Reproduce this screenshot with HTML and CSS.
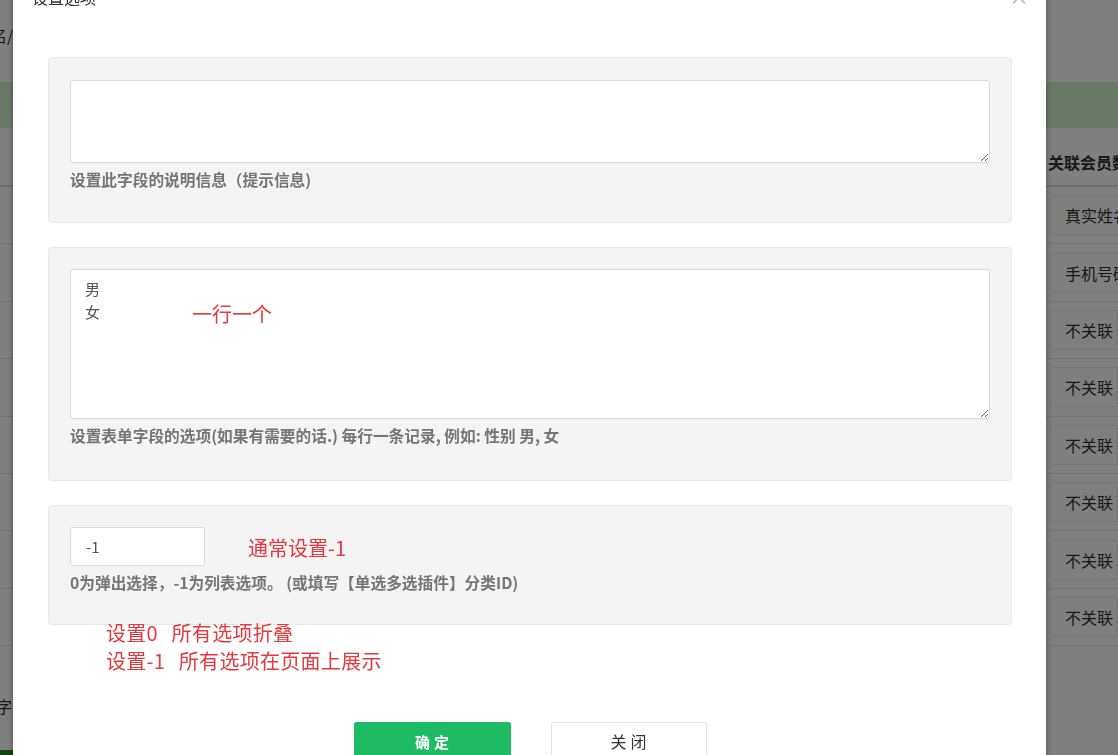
FILE: index.html
```html
<!DOCTYPE html>
<html lang="zh-CN">
<head>
  <meta charset="UTF-8" />
  <title>设置选项</title>
  <link rel="stylesheet" href="styles.css">
</head>
<body>

  <div class="page">
    <div class="crumb">用户名/表单字段</div>
    <div class="notice">提示：修改字段后请保存</div>
    <div class="table">
      <div class="tr th"><span class="c1">字段名称</span><span class="c2">关联会员数据</span></div>
      <div class="tr"><span class="c1">姓名</span><span class="c2"><span class="sel">真实姓名</span></span></div>
      <div class="tr"><span class="c1">电话</span><span class="c2"><span class="sel">手机号码</span></span></div>
      <div class="tr"><span class="c1">性别</span><span class="c2"><span class="sel">不关联</span></span></div>
      <div class="tr"><span class="c1">年龄</span><span class="c2"><span class="sel">不关联</span></span></div>
      <div class="tr"><span class="c1">地址</span><span class="c2"><span class="sel">不关联</span></span></div>
      <div class="tr"><span class="c1">备注</span><span class="c2"><span class="sel">不关联</span></span></div>
      <div class="tr"><span class="c1">职业</span><span class="c2"><span class="sel">不关联</span></span></div>
      <div class="tr"><span class="c1">爱好</span><span class="c2"><span class="sel">不关联</span></span></div>
    </div>
    <div class="foot">添加字</div>
    <div class="foot-bar"></div>
  </div>

  <div class="shade"></div>

  <div class="dialog">
    <div class="dlg-head">
      设置选项
      <span class="dlg-close">&times;</span>
    </div>

    <div class="dlg-body">
      <div class="box box-first">
        <textarea class="area area-sm"></textarea>
        <div class="tip">设置此字段的说明信息（提示信息)</div>
      </div>

      <div class="box">
        <div class="area-wrap">
          <textarea class="area area-lg">男
女</textarea>
          <span class="mark mark-area">一行一个</span>
        </div>
        <div class="tip">设置表单字段的选项(如果有需要的话.) 每行一条记录, 例如: 性别 男, 女</div>
      </div>

      <div class="box box-last">
        <div class="line">
          <input type="text" class="num" value="-1">
          <span class="mark">通常设置-1</span>
        </div>
        <div class="tip">0为弹出选择，-1为列表选项。 (或填写【单选多选插件】分类ID)</div>
      </div>

      <div class="notes">
        <div>设置0&nbsp;&nbsp;所有选项折叠</div>
        <div>设置-1&nbsp;&nbsp;所有选项在页面上展示</div>
      </div>

      <div class="btns">
        <button class="btn btn-ok">确定</button>
        <button class="btn btn-close">关闭</button>
      </div>
    </div>
  </div>

</body>
</html>
```

FILE: styles.css
```css
html, body {
  margin: 0;
  height: 100%;
  overflow: hidden;
}
body {
  font-family: "Noto Sans CJK SC", "Liberation Sans", sans-serif;
  background-color: #fff;
  color: #333;
}
.page {
  width: 1118px;
  font-size: 16px;
}
.crumb {
  height: 82px;
  line-height: 70px;
  text-indent: -41px;
  white-space: nowrap;
  overflow: hidden;
}
.notice {
  height: 46px;
  line-height: 46px;
  background-color: #d6f4d0;
  padding-left: 20px;
  color: #3c763d;
}
.tr {
  display: grid;
  grid-template-columns: 1034px 1fr;
  height: 56.4px;
  border-bottom: 1px solid #e6e6e6;
  align-items: center;
  white-space: nowrap;
  overflow: hidden;
}
.tr.th {
  height: 54px;
  align-items: end;
  padding-bottom: 3px;
  font-weight: bold;
  border-bottom: 2px solid #ddd;
}
.c1 {
  padding-left: 20px;
}
.c2 {
  padding-left: 14px;
}
.tr.th .c2 {
  padding-left: 14px;
  padding-bottom: 8px;
}
.sel {
  display: block;
  margin-left: 2px;
  height: 38px;
  line-height: 38px;
  padding-left: 14px;
  border: 1px solid #eaeaea;
  border-radius: 2px;
}
.foot {
  margin-top: 45px;
  text-indent: -36px;
  line-height: 30px;
  white-space: nowrap;
}
.foot-bar {
  margin-top: 29px;
  height: 12px;
  width: 100px;
  background-color: #1f8f1f;
}

.shade {
  position: fixed;
  left: 0;
  top: 0;
  right: 0;
  bottom: 0;
  background-color: rgba(0, 0, 0, 0.5);
}

.dialog {
  position: fixed;
  left: 13px;
  top: -24px;
  width: 1033px;
  height: 820px;
  background-color: #fff;
  box-shadow: 0 0 6px rgba(0, 0, 0, 0.4);
}
.dlg-head {
  position: relative;
  height: 42px;
  line-height: 42px;
  padding-left: 19px;
  font-size: 16px;
  color: #333;
}
.dlg-close {
  position: absolute;
  right: 17px;
  top: 0;
  font-size: 24px;
  color: #aaa;
  font-family: "DejaVu Sans", sans-serif;
  font-weight: 300;
}
.dlg-body {
  padding: 39px 34px 0 35px;
}
.box {
  background-color: #f4f4f4;
  border: 1px solid #e8e8e8;
  border-radius: 4px;
  padding: 21px 21px 32px;
  margin-bottom: 24px;
}
.box-first {
  padding-top: 22px;
  padding-bottom: 30px;
}
.box-last {
  margin-bottom: 0;
  padding-bottom: 29px;
}
.area-wrap {
  position: relative;
}
.area {
  display: block;
  width: 100%;
  box-sizing: border-box;
  border: 1px solid #d9d9d9;
  border-radius: 3px;
  background-color: #fff;
  padding: 7px 14px;
  font-family: "Noto Sans CJK SC", "Liberation Sans", sans-serif;
  font-size: 15px;
  line-height: 23px;
  color: #555;
  resize: vertical;
  margin: 0;
}
.area-sm {
  height: 83px;
}
.area-lg {
  height: 150px;
}
.tip {
  margin-top: 5px;
  line-height: 24px;
  font-size: 15.7px;
  font-weight: bold;
  color: #757575;
  white-space: nowrap;
}
.mark {
  color: #e5393d;
  font-size: 20px;
}
.mark-area {
  position: absolute;
  left: 122px;
  top: 30px;
  line-height: 30px;
}
.line {
  display: flex;
  align-items: center;
  gap: 43px;
}
.num {
  width: 135px;
  height: 39px;
  box-sizing: border-box;
  border: 1px solid #dcdcdc;
  border-radius: 3px;
  padding: 0 15px;
  font-family: "Noto Sans CJK SC", "Liberation Sans", sans-serif;
  font-size: 15px;
  color: #555;
  margin: 0;
}
.line .mark {
  margin-top: 2px;
}
.notes {
  margin-top: -6px;
  padding-left: 58px;
  color: #e5393d;
  font-size: 20px;
  line-height: 28px;
  word-spacing: 2px;
  letter-spacing: 0.3px;
}
.btns {
  margin-top: 47px;
  display: flex;
  justify-content: center;
  gap: 40px;
}
.btn {
  width: 157px;
  height: 38px;
  border-radius: 2px;
  font-family: "Noto Sans CJK SC", "Liberation Sans", sans-serif;
  font-size: 15px;
  letter-spacing: 4px;
  padding: 0 0 0 4px;
  cursor: pointer;
}
.btn-ok {
  background-color: #1fbb63;
  border: 1px solid #1fbb63;
  color: #fff;
  font-weight: bold;
}
.btn-close {
  width: 156px;
  background-color: #fff;
  border: 1px solid #e4e4e4;
  color: #333;
  font-size: 16px;
}
```
